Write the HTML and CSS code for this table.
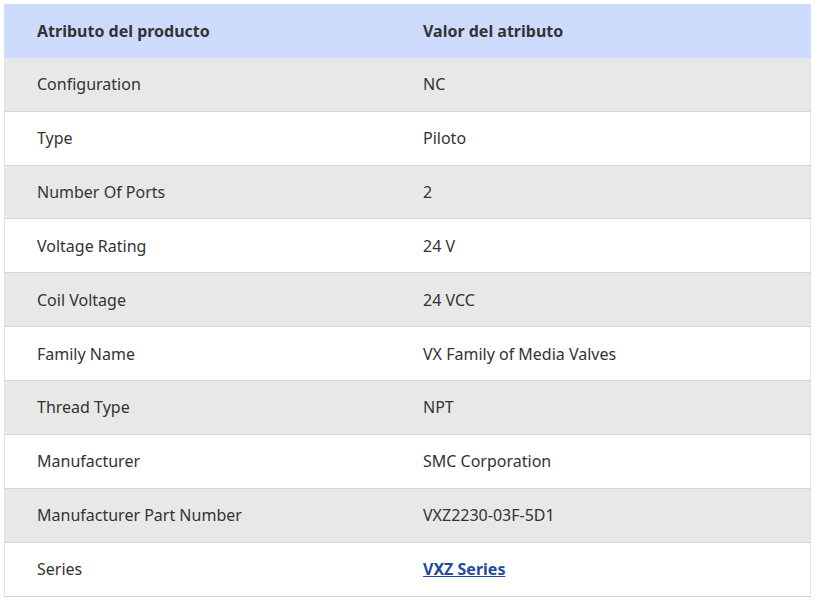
FILE: index.html
```html
<!DOCTYPE html>
<html lang="es">
<head>
<meta charset="utf-8">
<title>Atributos</title>
<link rel="stylesheet" href="styles.css">
</head>
<body>
<table class="attrs">
  <thead>
    <tr><th class="col-name">Atributo del producto</th><th>Valor del atributo</th></tr>
  </thead>
  <tbody>
    <tr><td>Configuration</td><td>NC</td></tr>
    <tr><td>Type</td><td>Piloto</td></tr>
    <tr><td>Number Of Ports</td><td>2</td></tr>
    <tr><td>Voltage Rating</td><td>24 V</td></tr>
    <tr><td>Coil Voltage</td><td>24 VCC</td></tr>
    <tr><td>Family Name</td><td>VX Family of Media Valves</td></tr>
    <tr><td>Thread Type</td><td>NPT</td></tr>
    <tr><td>Manufacturer</td><td>SMC Corporation</td></tr>
    <tr><td>Manufacturer Part Number</td><td>VXZ2230-03F-5D1</td></tr>
    <tr><td>Series</td><td><a class="link" href="#">VXZ Series</a></td></tr>
  </tbody>
</table>
</body>
</html>
```
FILE: styles.css
```css
html, body {
  margin: 0;
  padding: 0;
  background: #ffffff;
}
body {
  padding: 4px 6px 0 4px;
  font-family: "Noto Sans", "Open Sans", sans-serif;
  font-size: 16px;
  color: #333333;
}
.attrs {
  width: 807px;
  border-collapse: collapse;
  table-layout: fixed;
}
.attrs th, .attrs td {
  text-align: left;
  padding: 14.45px 32px;
  line-height: 24px;
  border-left: 1px solid #e3e3e3;
  border-right: 1px solid #e3e3e3;
  border-bottom: 1px solid #d6d6d6;
}
.attrs td + td, .attrs th + th {
  border-left: none;
}
.attrs td:first-child, .attrs th:first-child {
  border-right: none;
}
.attrs th {
  padding-top: 14.6px;
  padding-bottom: 14.2px;
  background: #cddcfd;
  font-weight: 700;
  color: #333333;
  border-color: #cddcfd;
  border-bottom: 1px solid #cddcfd;
}
.col-name {
  width: 322px;
}
.attrs tbody tr:nth-child(odd) td {
  background: #e8e8e8;
}
.attrs tbody tr:nth-child(even) td {
  background: #ffffff;
}
.link {
  color: #26499a;
  font-weight: 700;
  text-decoration: underline;
}
```
